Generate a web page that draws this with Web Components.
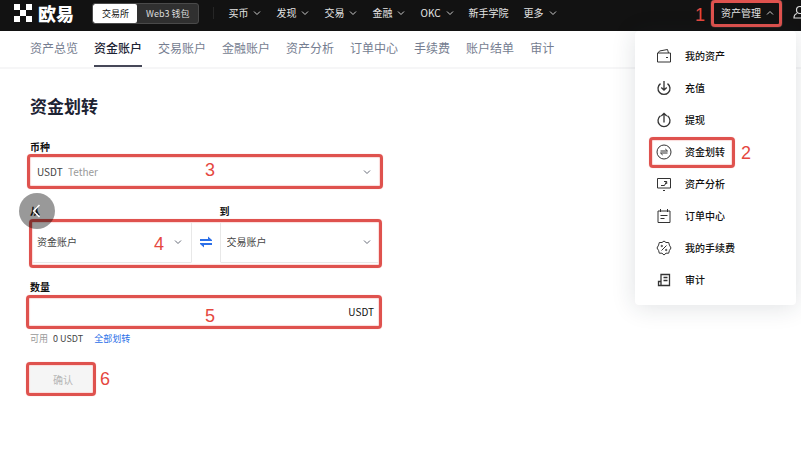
<!DOCTYPE html>
<html lang="zh-CN">
<head>
<meta charset="utf-8">
<meta name="viewport" content="width=device-width, initial-scale=1">
<title>资金划转</title>
<style>
    body{
        margin: 0;
        background: #fff;
        color: #111;
        font-family: "Noto Sans CJK SC", "Noto Sans", sans-serif;
        font-size: 10px;
        line-height: 16px;
    }
</style>
</head>
<body>
<transfer-page></transfer-page>

<script>
function define(name, html, setup){
    const template = document.createElement('template');
    template.innerHTML = html;

    window.customElements.define(name, class extends HTMLElement{
        constructor(){
            super();
            this.attachShadow({ mode: 'open' });
            this.shadowRoot.appendChild(template.content.cloneNode(true));
            if(setup) setup(this, this.shadowRoot);
        }
    });
}

const icons = {
    down: '<svg viewBox="0 0 8 8" width="8" height="8"><path d="M1 2.5l3 3 3-3"/></svg>',
    up: '<svg viewBox="0 0 8 8" width="8" height="8"><path d="M1 5.5l3-3 3 3"/></svg>',
    wallet: '<path d="M1.5 5h13v9h-13zM2 5l1.5-2 8-1.5L12.500 5M10 9.500h2"/>',
    deposit: '<path d="M4.500 3.600a6 6 0 1 0 7 0M8 1v9M5.300 7.500L8 10.200l2.700-2.700" stroke-width="1.300"/>',
    withdraw: '<path d="M4.500 3.800a6 6 0 1 0 7 0M8 10.500V1.300M5.300 4L8 1.300 10.700 4" stroke-width="1.300"/>',
    transfer: '<circle cx="8" cy="8" r="7"/><path d="M4.500 7h7L9.300 5M11.500 9h-7l2.200 2"/>',
    chart: '<path d="M1.500 2.500h13v9.500h-13zM7 14.500h2M5 9.500h3.500L10.500 5.500M8 5.500h2.700V8"/>',
    orders: '<path d="M2 3h12v11.500H2zM4.500 1v3M11.500 1v3M4.500 7.500h7M4.500 10.500h4"/>',
    fee: '<path d="M8 1l2 1.500h2.700l.7 2.600L15 8l-1.600 2.500-.7 2.700H10L8 15l-2-1.800H3.300l-.7-2.700L1 8l1.600-2.900.7-2.600H6zM5.500 10.500l5-5"/><circle cx="5.800" cy="6" r=".7"/><circle cx="10.200" cy="10" r=".7"/>',
    audit: '<path d="M5 13.500V2.500h8.500v11H2.500V9.500H5M7.500 5.500H11.500M7.500 8.500H11.500" stroke-width="1.300"/>'
};

/* red frame with a step number around whatever is slotted in */
define('step-mark', `
    <style>
    :host{
        display: block;
        position: relative;
    }

    .frame{
        position: absolute;
        inset: var(--frame, -3px);
        box-sizing: border-box;
        border: 3px solid #df524e;
        border-radius: 4px;
        box-shadow: 0 0 1px #f3a5a2, inset 0 0 1px 1px var(--halo, #fbdcdb);
        pointer-events: none;
        z-index: 2;
    }

    .number{
        position: absolute;
        left: var(--number-left, 50%);
        top: 50%;
        margin-top: var(--number-shift, -10px);
        color: #e5483f;
        font: 18px/20px "Liberation Sans", Arial, sans-serif;
        pointer-events: none;
        z-index: 2;
    }
    </style>
    <slot></slot>
    <div class="frame"></div>
    <span class="number"></span>
`, (host, root) => {
    root.querySelector('.number').textContent = host.getAttribute('step');
});

define('brand-logo', `
    <style>
    :host{
        display: flex;
        align-items: center;
        gap: 6px;
        color: #fff;
        font-size: 18px;
        font-weight: 900;
        line-height: 26px;
    }
    </style>
    <svg width="18" height="18" viewBox="0 0 18 18" fill="#fff" aria-hidden="true">
        <path d="M0 0h6v6H0zM12 0h6v6h-6zM6 6h6v6H6zM0 12h6v6H0zM12 12h6v6h-6z"/>
    </svg>
    <span>欧易</span>
`);

define('nav-item', `
    <style>
    :host{
        display: block;
    }

    a{
        display: flex;
        align-items: center;
        gap: 5px;
        color: #e4e4e4;
        text-decoration: none;
        white-space: nowrap;
    }

    svg{
        fill: none;
        stroke: #ccc;
        stroke-width: 1;
    }
    </style>
    <a href="#"><slot></slot></a>
`, (host, root) => {
    const arrow = host.getAttribute('arrow');
    if(arrow) root.querySelector('a').insertAdjacentHTML('beforeend', icons[arrow]);
});

define('top-bar', `
    <style>
    :host{
        display: flex;
        align-items: center;
        box-sizing: border-box;
        height: 31px;
        padding: 0 0 5px 14px;
        background: #121212;
        overflow: hidden;
    }

    .switch{
        display: flex;
        box-sizing: border-box;
        margin-left: 18px;
        border: 1px solid #4a4a4a;
        border-radius: 3px;
        background: #303030;
        overflow: hidden;
    }

    .switch button{
        padding: 0 9px;
        border: 0;
        background: none;
        color: #ddd;
        font: inherit;
        font-size: 9px;
        line-height: 19px;
        white-space: nowrap;
    }

    .switch .on{
        padding: 0 8px 0 9px;
        border-radius: 2px;
        background: #fff;
        color: #111;
    }

    nav{
        display: flex;
        gap: 15px;
        margin-left: 14px;
        padding-left: 14px;
        border-left: 1px solid #262626;
        line-height: 12px;
    }

    .right{
        display: flex;
        align-items: center;
        gap: 18px;
        margin: 0 -6px 0 auto;
    }

    step-mark{
        --frame: -5px -7px -6px -10px;
        --halo: transparent;
        --number-left: -26px;
        --number-shift: -8px;
    }

    .right nav-item{
        margin-right: 1px;
    }

    .user{
        display: flex;
        padding: 0;
        border: 0;
        background: none;
    }
    </style>
    <brand-logo></brand-logo>
    <div class="switch">
        <button class="on">交易所</button>
        <button>Web3 钱包</button>
    </div>
    <nav>
        <nav-item arrow="down">买币</nav-item>
        <nav-item arrow="down">发现</nav-item>
        <nav-item arrow="down">交易</nav-item>
        <nav-item arrow="down">金融</nav-item>
        <nav-item arrow="down">OKC</nav-item>
        <nav-item>新手学院</nav-item>
        <nav-item arrow="down">更多</nav-item>
    </nav>
    <div class="right">
        <step-mark step="1"><nav-item arrow="up">资产管理</nav-item></step-mark>
        <button class="user" aria-label="user">
            <svg width="14" height="16" viewBox="0 0 14 16" fill="none" stroke="#ddd" stroke-width="1.200">
                <circle cx="7" cy="5" r="3.500"/><path d="M4 8.500c-2 .5-3 2-3 4.500h12c0-2.500-1-4-3-4.500"/>
            </svg>
        </button>
    </div>
`);

define('tab-bar', `
    <style>
    :host{
        display: flex;
        gap: 16px;
        box-sizing: border-box;
        height: 38px;
        padding: 0 30px;
        border-bottom: 2px solid #f6f6f7;
    }

    ::slotted(a){
        box-sizing: border-box;
        height: 36px;
        border-bottom: 2px solid transparent;
        color: #757d90;
        font-size: 12px;
        line-height: 34px;
        text-decoration: none;
        white-space: nowrap;
    }

    ::slotted(a[aria-current]){
        border-color: #454757;
        color: #1d2333;
        font-weight: 500;
    }
    </style>
    <slot></slot>
`);

define('menu-item', `
    <style>
    :host{
        display: block;
    }

    a{
        display: flex;
        align-items: center;
        gap: 13px;
        height: 32px;
        color: #111;
        font-weight: 500;
        text-decoration: none;
    }

    svg{
        fill: none;
        stroke: #333;
        stroke-width: 1;
    }
    </style>
    <a href="#">
        <svg width="16" height="16" viewBox="0 0 16 16" aria-hidden="true"></svg>
        <slot></slot>
    </a>
`, (host, root) => {
    root.querySelector('svg').innerHTML = icons[host.getAttribute('icon')];
});

define('asset-menu', `
    <style>
    :host{
        display: block;
        box-sizing: border-box;
        width: 161px;
        padding: 9px 21px;
        border-radius: 4px;
        background: #fff;
        box-shadow: 0 2px 24px rgba(30, 40, 60, 0.14);
    }

    step-mark{
        width: fit-content;
        padding-right: 3px;
        --frame: 1px -7px 0 -7px;
        --number-left: calc(100% + 13px);
        --number-shift: -9px;
    }
    </style>
    <menu-item icon="wallet">我的资产</menu-item>
    <menu-item icon="deposit">充值</menu-item>
    <menu-item icon="withdraw">提现</menu-item>
    <step-mark step="2"><menu-item icon="transfer">资金划转</menu-item></step-mark>
    <menu-item icon="chart">资产分析</menu-item>
    <menu-item icon="orders">订单中心</menu-item>
    <menu-item icon="fee">我的手续费</menu-item>
    <menu-item icon="audit">审计</menu-item>
`);

/* drop-down: attributes label, value, note (grey text after the value) */
define('select-box', `
    <style>
    :host{
        display: block;
        position: relative;
    }

    select{
        display: block;
        box-sizing: border-box;
        width: 100%;
        height: var(--height, 30px);
        padding: 0 24px 0 6px;
        border: 1px solid #e8e8e8;
        border-radius: 1px;
        background: #fff;
        color: #444;
        font: inherit;
        appearance: none;
    }

    .note{
        position: absolute;
        left: 38px;
        top: calc(50% - 8px);
        color: #999;
        pointer-events: none;
    }

    svg{
        position: absolute;
        right: 10px;
        top: calc(50% - 4px);
        fill: none;
        stroke: #666b78;
        pointer-events: none;
    }
    </style>
    <select><option></option></select>
    <span class="note"></span>
    ${icons.down}
`, (host, root) => {
    root.querySelector('select').setAttribute('aria-label', host.getAttribute('label'));
    root.querySelector('option').textContent = host.getAttribute('value');
    root.querySelector('.note').textContent = host.getAttribute('note') || '';
});

define('transfer-form', `
    <style>
    :host{
        display: block;
        max-width: 351px;
    }

    h1{
        margin: 0 0 20px;
        color: #1d2333;
        font-size: 17px;
        font-weight: 700;
        line-height: 26px;
    }

    .label{
        display: block;
        margin-bottom: 2px;
        font-weight: 700;
    }

    .coin{
        --frame: -3px -2px -2px -3px;
        --number-left: 175px;
        --number-shift: -12px;
    }

    .labels, .pair{
        display: grid;
        grid-template-columns: 1fr 28px 1fr;
    }

    .labels{
        margin-top: 16px;
    }

    .labels .label:last-child{
        grid-column: 3;
    }

    .pair{
        align-items: center;
    }

    .accounts{
        --height: 42px;
        --frame: -2px -1px -5px -1px;
        --number-left: 124px;
        --number-shift: -8px;
    }

    .swap{
        display: flex;
        justify-content: center;
        padding: 0;
        border: 0;
        background: none;
    }

    .amount{
        --frame: -2px -1px -3px -4px;
        --number-left: 175px;
        --number-shift: -6px;
    }

    .amount-label{
        margin-top: 16px;
    }

    .field{
        display: flex;
        align-items: center;
        height: 29px;
        padding-right: 7px;
    }

    input{
        flex: 1;
        min-width: 0;
        height: 24px;
        padding: 0 7px;
        border: 0;
        outline: 0;
        font: inherit;
    }

    .balance{
        display: flex;
        gap: 5px;
        margin-top: 5px;
        color: #444;
        font-size: 9px;
    }

    .balance .muted{
        color: #999;
    }

    .balance a{
        margin-left: 6px;
        color: #2b6fe8;
        text-decoration: none;
    }

    .confirm{
        width: fit-content;
        margin-top: 18px;
        --frame: -3px -3px -2px -4px;
        --number-left: calc(100% + 7px);
        --number-shift: -11px;
    }

    .confirm button{
        display: block;
        width: 63px;
        height: 29px;
        padding: 0 0 0 3px;
        border: 0;
        background: #f5f5f5;
        color: #b5b5b5;
        font: inherit;
    }
    </style>
    <h1>资金划转</h1>
    <span class="label">币种</span>
    <step-mark class="coin" step="3">
        <select-box label="币种" value="USDT" note="Tether"></select-box>
    </step-mark>

    <div class="labels">
        <span class="label">从</span>
        <span class="label">到</span>
    </div>
    <step-mark class="accounts" step="4">
        <div class="pair">
            <select-box label="从" value="资金账户"></select-box>
            <button class="swap" aria-label="swap">
                <svg width="14" height="12" viewBox="0 0 14 12" fill="#2b6fe8" aria-hidden="true">
                    <path d="M1 3h8V.5L13 4v1H1zM13 9H5v2.500L1 8V7h12z"/>
                </svg>
            </button>
            <select-box label="到" value="交易账户"></select-box>
        </div>
    </step-mark>

    <label class="label amount-label" for="amount">数量</label>
    <step-mark class="amount" step="5">
        <div class="field"><input id="amount" type="text"><span>USDT</span></div>
    </step-mark>
    <div class="balance">
        <span class="muted">可用</span><span>0 USDT</span><a href="#">全部划转</a>
    </div>

    <step-mark class="confirm" step="6"><button disabled>确认</button></step-mark>
`);

define('back-button', `
    <style>
    :host{
        display: block;
    }

    button{
        display: flex;
        align-items: center;
        justify-content: center;
        width: 36px;
        height: 36px;
        padding: 0;
        border: 0;
        border-radius: 50%;
        background: rgba(0, 0, 0, 0.4);
    }
    </style>
    <button aria-label="back">
        <svg width="16" height="16" viewBox="0 0 16 16" fill="none" stroke="#fff" stroke-width="1.500">
            <path d="M10.500 2L4.500 8l6 6"/>
        </svg>
    </button>
`);

define('transfer-page', `
    <style>
    :host{
        display: block;
        position: relative;
    }

    main{
        padding: 24px 30px;
    }

    asset-menu{
        position: absolute;
        top: 31px;
        right: 5px;
        z-index: 3;
    }

    back-button{
        position: absolute;
        left: 19px;
        top: 193px;
        z-index: 4;
    }
    </style>
    <top-bar></top-bar>
    <tab-bar>
        <a href="#">资产总览</a>
        <a href="#" aria-current="page">资金账户</a>
        <a href="#">交易账户</a>
        <a href="#">金融账户</a>
        <a href="#">资产分析</a>
        <a href="#">订单中心</a>
        <a href="#">手续费</a>
        <a href="#">账户结单</a>
        <a href="#">审计</a>
    </tab-bar>
    <main><transfer-form></transfer-form></main>
    <asset-menu></asset-menu>
    <back-button></back-button>
`);
</script>
</body>
</html>
